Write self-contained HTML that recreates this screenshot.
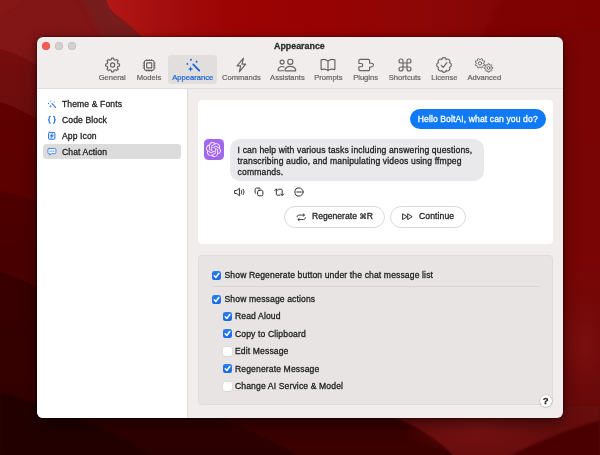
<!DOCTYPE html>
<html lang="en">
<head>
<meta charset="utf-8">
<title>Appearance</title>
<style>
*{box-sizing:border-box;margin:0;padding:0}
html,body{width:600px;height:455px;overflow:hidden;background:#5a0505}
body{font-family:"Liberation Sans",sans-serif;color:#1f1f1f;-webkit-text-stroke:.28px currentColor;position:relative;-webkit-font-smoothing:antialiased}
#wall{position:absolute;left:0;top:0;width:600px;height:455px;display:block}
#win{will-change:transform;position:absolute;left:37px;top:37px;width:526px;height:381px;border-radius:6px;background:#f1eded;overflow:hidden;
 box-shadow:0 0 0 .5px rgba(0,0,0,.4),0 7px 16px rgba(0,0,0,.4),0 0 5px rgba(0,0,0,.35)}
.abs{position:absolute}
.tl{position:absolute;top:4.900px;width:7.800px;height:7.800px;border-radius:50%;box-shadow:inset 0 0 0 .5px rgba(0,0,0,.13)}
#title{position:absolute;left:-.6px;width:526px;top:2.5px;text-align:center;font-weight:bold;font-size:8.900px;line-height:12px;color:#2b2b2b}
#tbline{position:absolute;left:0;top:51px;width:526px;height:1px;background:#e0dcdb}
.tbi{position:absolute;top:18px;height:28.500px;text-align:center;font-size:7.600px;color:#666363;-webkit-text-stroke:.2px currentColor;white-space:nowrap}
.tbi svg{position:absolute;top:1.900px;left:50%;margin-left:-8px;width:16px;height:16px;overflow:visible}
.tbi span{position:absolute;left:-20px;right:-20px;top:18px;line-height:9px;text-align:center}
.tbi.sel{background:#e2dedd;border-radius:4px;color:#1261d6}
#side{position:absolute;left:0;top:52px;width:151px;height:329px;background:#fff;border-right:1px solid #dedada}
.si{position:absolute;left:6px;width:137.500px;height:15.400px;border-radius:3.500px;font-size:8.600px;letter-spacing:.1px;line-height:15.400px;padding-left:19px;color:#222;white-space:nowrap}
.si svg{position:absolute;left:4.100px;top:2.900px;width:9.800px;height:9.800px;overflow:visible}
.si.sel{background:#dcdcdc}
.si .t{display:inline-block;transform:translateY(.5px)}
#card{position:absolute;left:161px;top:62.5px;width:355px;height:144.5px;background:#fff;border-radius:4px}
#ububble{position:absolute;left:211.500px;top:9px;width:136.5px;height:20.5px;border-radius:10.5px;background:#0f79f7;color:#fff;font-size:8.600px;letter-spacing:.1px;line-height:20.500px;text-align:center;white-space:nowrap}
#avatar{position:absolute;width:20.400px;height:20.400px;border-radius:4.500px;background:#a068ec}
#abubble{position:absolute;left:193px;top:102px;width:253.5px;height:42px;border-radius:10px;background:#e9e9eb;font-size:8.600px;letter-spacing:.13px;line-height:10.900px;padding:6px 0 0 7.600px;color:#1d1d1d;white-space:nowrap}
.act{position:absolute;top:86.100px;width:12px;height:12px;overflow:visible}
.pill{position:absolute;top:106.700px;height:21.500px;border-radius:11px;border:1px solid #d9d9d9;background:#fff;font-size:8.600px;letter-spacing:.1px;line-height:19.5px;color:#222;white-space:nowrap}
#group{position:absolute;left:161px;top:218px;width:355px;height:149.5px;border-radius:4px;background:#e7e4e3;border:0.5px solid #dfdbda}
.cb{position:absolute;width:9.200px;height:9.200px;border-radius:2.300px}
.cb.on{background:linear-gradient(#2a7ff3,#1468e6)}
.cb.off{background:#fff;box-shadow:0 0 0 .5px #d8d5d5,0 .5px .8px rgba(0,0,0,.12)}
.cb svg{position:absolute;left:0;top:0;width:9.200px;height:9.200px}
.lbl{position:absolute;font-size:8.600px;letter-spacing:.12px;line-height:11px;color:#1d1d1d;white-space:nowrap}
#help{position:absolute;left:502.5px;top:357.5px;width:12.5px;height:12.5px;border-radius:50%;background:#fff;box-shadow:0 0 0 0.5px rgba(0,0,0,.12),0 0.5px 1.5px rgba(0,0,0,.25);font-size:9.500px;font-weight:bold;line-height:12.800px;text-align:center;color:#222}
</style>
</head>
<body>
<svg id="wall" viewBox="0 0 600 455">
<defs>
<linearGradient id="gbase" x1="0" y1="0" x2="0" y2="1">
<stop offset="0" stop-color="#8f1414"/><stop offset="0.12" stop-color="#7e1010"/><stop offset="0.3" stop-color="#690505"/><stop offset="0.5" stop-color="#520000"/><stop offset="0.72" stop-color="#3e0000"/><stop offset="0.9" stop-color="#340000"/><stop offset="1" stop-color="#2a0000"/>
</linearGradient>
<linearGradient id="gtop" x1="0" y1="0" x2="1" y2="0">
<stop offset="0" stop-color="#b31717"/><stop offset="0.1" stop-color="#a60f0f"/><stop offset="0.25" stop-color="#9c0404"/><stop offset="0.42" stop-color="#990202"/><stop offset="0.65" stop-color="#8c0707"/><stop offset="0.8" stop-color="#820606"/><stop offset="1" stop-color="#7a0404"/>
</linearGradient>
<linearGradient id="gright" x1="0" y1="0" x2="0" y2="1">
<stop offset="0" stop-color="#7a0404"/><stop offset="0.55" stop-color="#7a0505"/><stop offset="0.75" stop-color="#730909"/><stop offset="0.92" stop-color="#6a0a0a"/><stop offset="1" stop-color="#600808"/>
</linearGradient>
<radialGradient id="gglow" cx="0.5" cy="0.5" r="0.5">
<stop offset="0" stop-color="#7e1212"/><stop offset="1" stop-color="#7e1212" stop-opacity="0"/>
</radialGradient>
<radialGradient id="gglow2" cx="0.5" cy="0.5" r="0.5"><stop offset="0" stop-color="#7c1313" stop-opacity=".85"/><stop offset="1" stop-color="#7c1313" stop-opacity="0"/></radialGradient>
<linearGradient id="gl1" x1="0" y1="48" x2="0" y2="135" gradientUnits="userSpaceOnUse"><stop offset="0" stop-color="#760d0d"/><stop offset="1" stop-color="#680606"/></linearGradient>
<linearGradient id="gl2" x1="0" y1="101" x2="0" y2="220" gradientUnits="userSpaceOnUse"><stop offset="0" stop-color="#610303"/><stop offset="1" stop-color="#590000"/></linearGradient>
<linearGradient id="gl3" x1="0" y1="190" x2="0" y2="300" gradientUnits="userSpaceOnUse"><stop offset="0" stop-color="#4f0000"/><stop offset="1" stop-color="#470000"/></linearGradient>
<linearGradient id="gl4" x1="0" y1="271" x2="0" y2="415" gradientUnits="userSpaceOnUse"><stop offset="0" stop-color="#390000"/><stop offset="1" stop-color="#320000"/></linearGradient>
<filter id="b1" x="-20%" y="-5%" width="140%" height="110%"><feGaussianBlur stdDeviation=".7"/></filter>
<filter id="b2" x="-20%" y="-20%" width="140%" height="140%"><feGaussianBlur stdDeviation="1.2"/></filter>
<filter id="b4" x="-30%" y="-30%" width="160%" height="160%"><feGaussianBlur stdDeviation="3.2"/></filter>
<filter id="b3" x="-30%" y="-30%" width="160%" height="160%"><feGaussianBlur stdDeviation="2.2"/></filter>
<filter id="b6" x="-20%" y="-20%" width="140%" height="140%"><feGaussianBlur stdDeviation="5"/></filter>
</defs>
<rect width="600" height="455" fill="url(#gbase)"/>
<!-- top-left medium red area -->
<path d="M-5 -5H112L125 40L50 85H-5Z" fill="#821515"/>
<path d="M0 16L24 0H0Z" fill="#8c1a1a" opacity=".4" filter="url(#b2)"/>
<!-- dark fold band -->
<path d="M76 -10H111C111 8 114 13 120 17C128 23 136 30 148 42L148 66H114C106 42 90 14 76 -10Z" fill="#761b1b" filter="url(#b4)"/>
<!-- bright red top region and right side -->
<path d="M106.500 0C108 7 112 12 118 16C126 21.500 133 28 141.500 36L154 48H600V0Z" fill="url(#gtop)"/>
<path d="M500 0L478 45H600V0Z" fill="#7e0505" opacity=".55" filter="url(#b2)"/>
<rect x="540" y="30" width="60" height="400" fill="url(#gright)"/>
<ellipse cx="584" cy="345" rx="22" ry="45" fill="url(#gglow)" opacity=".7"/>
<!-- left strip folds -->
<g filter="url(#b1)">
<path d="M-4 48C12 51 28 58 48 74V135H-4Z" fill="url(#gl1)"/>
<path d="M-4 101C14 106 30 114 48 127V220H-4Z" fill="url(#gl2)"/>
<path d="M-4 190C14 193 30 198 48 206V300H-4Z" fill="url(#gl3)"/>
<path d="M-4 271C14 276 30 283 48 293V415H-4Z" fill="url(#gl4)"/>
</g>
<path d="M0 392C20 398 60 412 100 428C120 437 138 447 150 457H0Z" fill="#220000" filter="url(#b2)"/>
<!-- bottom strip -->
<path d="M200 410C240 426 275 442 300 457H600V410Z" fill="#3b0000" filter="url(#b2)"/>
<path d="M368 406H600V457H454C442 443 424 430 400 420C390 416 378 413 368 411Z" fill="#680808" filter="url(#b2)"/>
<ellipse cx="478" cy="430" rx="75" ry="24" fill="url(#gglow2)"/>
<path d="M600 420C572 428 540 440 508 457H600Z" fill="#4c0404" filter="url(#b2)"/>
</svg>

<div id="win">
 <div class="tl" style="left:5px;background:#fb5a52"></div>
 <div class="tl" style="left:18px;background:#d3d0cf"></div>
 <div class="tl" style="left:31px;background:#d3d0cf"></div>
 <div id="title">Appearance</div>
<div class="tbi" style="left:50.7px;width:49px"><svg viewBox="0 0 16 16" fill="none" stroke="currentColor" stroke-width="1.150" stroke-linecap="round" stroke-linejoin="round"><g transform="translate(.6 0)"><path d="M13.34 6.66 L14.92 6.97 L14.92 9.03 L13.34 9.34 L12.72 10.83 L13.62 12.17 L12.17 13.62 L10.83 12.72 L9.34 13.34 L9.03 14.92 L6.97 14.92 L6.66 13.34 L5.17 12.72 L3.83 13.62 L2.38 12.17 L3.28 10.83 L2.66 9.34 L1.08 9.03 L1.08 6.97 L2.66 6.66 L3.28 5.17 L2.38 3.83 L3.83 2.38 L5.17 3.28 L6.66 2.66 L6.97 1.08 L9.03 1.08 L9.34 2.66 L10.83 3.28 L12.17 2.38 L13.62 3.83 L12.72 5.17Z"/><circle cx="8" cy="8" r="2.100"/></g></svg><span>General</span></div>
<div class="tbi" style="left:87.5px;width:49px"><svg viewBox="0 0 16 16" fill="none" stroke="currentColor" stroke-width="1.150" stroke-linecap="round" stroke-linejoin="round"><g transform="translate(.2 .4)"><rect x="3.1" y="3.1" width="9.8" height="9.8" rx="1.8"/><rect x="5.5" y="5.5" width="5" height="5" rx=".4"/><path d="M5.6 2v1.100M8 2v1.100M10.4 2v1.100M5.6 12.900v1.100M8 12.900v1.100M10.4 12.900v1.100M2 5.600h1.100M2 8h1.100M2 10.400h1.100M12.900 5.600h1.100M12.900 8h1.100M12.900 10.400h1.100" stroke-width=".9"/></g></svg><span>Models</span></div>
<div class="tbi sel" style="left:131.2px;width:49px"><svg viewBox="0 0 16 16" fill="none" stroke="currentColor" stroke-width="1.150" stroke-linecap="round" stroke-linejoin="round"><path d="M8.200 7.300L14.300 13.600" stroke-width="1.700"/><g fill="currentColor" stroke="none"><circle cx="6" cy="2.800" r=".95"/><circle cx="11.600" cy="4.800" r=".95"/><circle cx="2.400" cy="6.900" r=".95"/><path d="M5.600 9.300L6.300 11.300L8.300 12L6.300 12.700L5.600 14.700L4.900 12.700L2.900 12L4.900 11.300Z"/></g></svg><span>Appearance</span></div>
<div class="tbi" style="left:179.9px;width:49px"><svg viewBox="0 0 16 16" fill="none" stroke="currentColor" stroke-width="1.150" stroke-linecap="round" stroke-linejoin="round"><path d="M10.500 1.200L4 8.800H7.700L6.300 14.800L12.700 7.100H8.900Z"/></svg><span>Commands</span></div>
<div class="tbi" style="left:225.9px;width:49px"><svg viewBox="0 0 20 16" style="width:20px;margin-left:-10px" fill="none" stroke="currentColor" stroke-width="1.150" stroke-linecap="round" stroke-linejoin="round"><circle cx="5.1" cy="5.1" r="2"/><path d="M7 9.9C6.4 9.6 5.8 9.5 5.1 9.5C2.9 9.5 1.5 10.9 1.1 12.7C1 13.3 1.2 13.7 1.8 13.7H6.4"/><circle cx="13.3" cy="4.8" r="2.6"/><path d="M8.7 13.9h9.3c.6 0 .8-.4.7-1c-.5-2-2.500-3.500-5.400-3.500s-4.800 1.500-5.300 3.500c-.1.600.1 1 .7 1z"/></svg><span>Assistants</span></div>
<div class="tbi" style="left:266.9px;width:49px"><svg viewBox="0 0 16 16" fill="none" stroke="currentColor" stroke-width="1.150" stroke-linecap="round" stroke-linejoin="round"><path d="M8 4.100C6.500 2.500 3.500 2.100 1.100 2.900V12.600C3.500 11.800 6.500 12.200 8 13.700C9.500 12.200 12.500 11.800 14.900 12.600V2.900C12.500 2.100 9.500 2.500 8 4.100ZM8 4.100V13.700"/></svg><span>Prompts</span></div>
<div class="tbi" style="left:304.1px;width:49px"><svg viewBox="0 0 16 16" fill="none" stroke="currentColor" stroke-width="1.150" stroke-linecap="round" stroke-linejoin="round"><path d="M2.100 2.400H10.400a1.200 1.200 0 0 1 1.200 1.200V6.200h1.900a1.900 1.900 0 0 1 0 3.800h-1.900V12.400a1.200 1.200 0 0 1-1.200 1.200H2.100a1.200 1.200 0 0 1-1.200-1.200V9.700h2.200a1.600 1.600 0 0 0 0-3.200H.9V3.600a1.200 1.200 0 0 1 1.200-1.200Z"/></svg><span>Plugins</span></div>
<div class="tbi" style="left:343.3px;width:49px"><svg viewBox="0 0 16 16" fill="none" stroke="currentColor" stroke-width="1.150" stroke-linecap="round" stroke-linejoin="round"><path d="M6 6V4a2 2 0 1 0-2 2H12a2 2 0 1 0-2-2V12a2 2 0 1 0 2-2H4a2 2 0 1 0 2 2Z"/></svg><span>Shortcuts</span></div>
<div class="tbi" style="left:382.9px;width:49px"><svg viewBox="0 0 16 16" fill="none" stroke="currentColor" stroke-width="1.150" stroke-linecap="round" stroke-linejoin="round"><path d="M5.74 2.55C6.08 0.02 9.92 0.02 10.26 2.55C12.29 1.00 15.00 3.71 13.45 5.74C15.98 6.08 15.98 9.92 13.45 10.26C15.00 12.29 12.29 15.00 10.26 13.45C9.92 15.98 6.08 15.98 5.74 13.45C3.71 15.00 1.00 12.29 2.55 10.26C0.02 9.92 0.02 6.08 2.55 5.74C1.00 3.71 3.71 1.00 5.74 2.55Z"/><path d="M5.200 8.300L7.200 10.400L10.900 5.700"/></svg><span>License</span></div>
<div class="tbi" style="left:422.8px;width:49px"><svg viewBox="0 0 20 16" style="width:20px;margin-left:-10px" fill="none" stroke="currentColor" stroke-linecap="round" stroke-linejoin="round" stroke-width=".9"><path d="M9.76 6.86 L10.75 7.49 L10.20 8.82 L9.05 8.56 L8.26 9.35 L8.52 10.50 L7.19 11.05 L6.56 10.06 L5.44 10.06 L4.81 11.05 L3.48 10.50 L3.74 9.35 L2.95 8.56 L1.80 8.82 L1.25 7.49 L2.24 6.86 L2.24 5.74 L1.25 5.11 L1.80 3.78 L2.95 4.04 L3.74 3.25 L3.48 2.10 L4.81 1.55 L5.44 2.54 L6.56 2.54 L7.19 1.55 L8.52 2.10 L8.26 3.25 L9.05 4.04 L10.20 3.78 L10.75 5.11 L9.76 5.74Z"/><circle cx="6" cy="6.300" r="1.700"/><path d="M17.70 10.17 L18.75 10.33 L18.75 11.57 L17.70 11.73 L17.34 12.60 L17.97 13.45 L17.10 14.32 L16.25 13.69 L15.38 14.05 L15.22 15.10 L13.98 15.10 L13.82 14.05 L12.95 13.69 L12.10 14.32 L11.23 13.45 L11.86 12.60 L11.50 11.73 L10.45 11.57 L10.45 10.33 L11.50 10.17 L11.86 9.30 L11.23 8.45 L12.10 7.58 L12.95 8.21 L13.82 7.85 L13.98 6.80 L15.22 6.80 L15.38 7.85 L16.25 8.21 L17.10 7.58 L17.97 8.45 L17.34 9.30Z"/><circle cx="14.600" cy="10.950" r="1.400"/></svg><span>Advanced</span></div>
 <div id="tbline"></div>
<div id="side">
<div class="si" style="top:7.4px"><svg viewBox="0 0 11 11" fill="none" stroke="currentColor" stroke-width="1.3" stroke-linecap="round" stroke-linejoin="round" style="color:#2f78e0"><path d="M5.600 5.300L9.800 9.600" stroke-width="1.300"/><g fill="currentColor" stroke="none"><circle cx="4.200" cy="2.300" r=".65"/><circle cx="8" cy="3.400" r=".65"/><circle cx="1.700" cy="5" r=".65"/><path d="M3.900 6.300L4.350 7.550L5.600 8L4.350 8.450L3.900 9.700L3.450 8.450L2.200 8L3.450 7.550Z"/></g></svg><span class="t">Theme &amp; Fonts</span></div>
<div class="si" style="top:23.1px"><svg viewBox="0 0 11 11" fill="none" stroke="currentColor" stroke-width="1.3" stroke-linecap="round" stroke-linejoin="round" style="color:#2f78e0"><path d="M3.700 1.600C2.700 1.600 2.500 2.100 2.500 2.900V4.200C2.500 4.900 2.200 5.300 1.500 5.400C2.200 5.500 2.500 5.900 2.500 6.600V7.900C2.500 8.700 2.700 9.200 3.700 9.200M7.300 1.600C8.300 1.600 8.500 2.100 8.500 2.900V4.200C8.500 4.900 8.800 5.300 9.500 5.400C8.800 5.500 8.500 5.900 8.500 6.600V7.900C8.500 8.700 8.300 9.200 7.300 9.200"/></svg><span class="t">Code Block</span></div>
<div class="si" style="top:38.9px"><svg viewBox="0 0 11 11" fill="none" stroke="currentColor" stroke-width="1.3" stroke-linecap="round" stroke-linejoin="round" style="color:#2f78e0"><rect x="1.700" y="1.500" width="7.200" height="7.800" rx="1.100" fill="#dbe9fb" stroke-width="1.100"/><path d="M6.100 2.500L3.500 5.900H5.200L4.500 8.400L7.200 4.900H5.500Z" fill="currentColor" stroke-width=".4"/></svg><span class="t">App Icon</span></div>
<div class="si sel" style="top:54.5px"><svg viewBox="0 0 11 11" fill="none" stroke="currentColor" stroke-width="1.3" stroke-linecap="round" stroke-linejoin="round" style="color:#2f78e0"><g transform="translate(0 .9)"><path d="M2.400 1.900H8.600A1.400 1.400 0 0 1 10 3.300V6.300A1.400 1.400 0 0 1 8.600 7.700H4.900L3 9.500V7.700H2.400A1.400 1.400 0 0 1 1 6.300V3.300A1.400 1.400 0 0 1 2.400 1.900Z" fill="#f2f6fc" stroke-width=".95"/><g fill="currentColor" stroke="none"><circle cx="3.500" cy="4.800" r=".65"/><circle cx="5.500" cy="4.800" r=".65"/><circle cx="7.500" cy="4.800" r=".65"/></g></g></svg><span class="t">Chat Action</span></div>
</div>
<div id="card">
<div id="ububble">Hello BoltAI, what can you do?</div>
<div id="avatar" style="left:5.600px;top:39.700px"><svg viewBox="0 0 24 24" style="position:absolute;left:2.700px;top:2.700px;width:15px;height:15px" fill="#f8e6fb"><path d="M22.2819 9.8211a5.9847 5.9847 0 0 0-.5157-4.9108 6.0462 6.0462 0 0 0-6.5098-2.9A6.0651 6.0651 0 0 0 4.9807 4.1818a5.9847 5.9847 0 0 0-3.9977 2.9 6.0462 6.0462 0 0 0 .7427 7.0966 5.98 5.98 0 0 0 .511 4.9107 6.051 6.051 0 0 0 6.5146 2.9001A5.9847 5.9847 0 0 0 13.2599 24a6.0557 6.0557 0 0 0 5.7718-4.2058 5.9894 5.9894 0 0 0 3.9977-2.9001 6.0557 6.0557 0 0 0-.7475-7.0729zm-9.022 12.6081a4.4755 4.4755 0 0 1-2.8764-1.0408l.1419-.0804 4.7783-2.7582a.7948.7948 0 0 0 .3927-.6813v-6.7369l2.02 1.1686a.071.071 0 0 1 .038.052v5.5826a4.504 4.504 0 0 1-4.4945 4.4944zm-9.6607-4.1254a4.4708 4.4708 0 0 1-.5346-3.0137l.142.0852 4.783 2.7582a.7712.7712 0 0 0 .7806 0l5.8428-3.3685v2.3324a.0804.0804 0 0 1-.0332.0615L9.74 19.9502a4.4992 4.4992 0 0 1-6.1408-1.6464zM2.3408 7.8956a4.485 4.485 0 0 1 2.3655-1.9728V11.6a.7664.7664 0 0 0 .3879.6765l5.8144 3.3543-2.0201 1.1685a.0757.0757 0 0 1-.071 0l-4.8303-2.7865A4.504 4.504 0 0 1 2.3408 7.872zm16.5963 3.8558L13.1038 8.364 15.1192 7.2a.0757.0757 0 0 1 .071 0l4.8303 2.7913a4.4944 4.4944 0 0 1-.6765 8.1042v-5.6772a.79.79 0 0 0-.407-.667zm2.0107-3.0231l-.142-.0852-4.7735-2.7818a.7759.7759 0 0 0-.7854 0L9.409 9.2297V6.8974a.0662.0662 0 0 1 .0284-.0615l4.8303-2.7866a4.4992 4.4992 0 0 1 6.6802 4.66zM8.3065 12.863l-2.02-1.1638a.0804.0804 0 0 1-.038-.0567V6.0742a4.4992 4.4992 0 0 1 7.3757-3.4537l-.142.0805L8.704 5.459a.7948.7948 0 0 0-.3927.6813zm1.0976-2.3654l2.602-1.4998 2.6069 1.4998v2.9994l-2.5974 1.4997-2.6067-1.4997Z"/></svg></div>
<div id="abubble" style="left:32px;top:39.500px">I can help with various tasks including answering questions,<br>transcribing audio, and manipulating videos using ffmpeg<br>commands.</div>
<svg class="act" style="left:35.500px;color:#333" viewBox="0 0 12 12" fill="none" stroke="currentColor" stroke-width="1" stroke-linecap="round" stroke-linejoin="round"><path d="M1 4.500H2.800L5.400 2.200V9.800L2.800 7.500H1Z"/><path d="M7.300 4.400C8 5.300 8 6.700 7.300 7.600M9 3.200C10.400 4.800 10.400 7.200 9 8.800"/></svg>
<svg class="act" style="left:55.400px;color:#333" viewBox="0 0 12 12" fill="none" stroke="currentColor" stroke-width="1" stroke-linecap="round" stroke-linejoin="round"><rect x="4.600" y="4.300" width="5.300" height="5.500" rx="1.500" fill="#fff"/><path d="M2.900 7.600C2.400 7.400 2.100 6.900 2.100 6.300V3.500C2.100 2.700 2.700 2.100 3.500 2.100H6.100C6.800 2.100 7.300 2.400 7.500 2.900"/></svg>
<svg class="act" style="left:75px;color:#333" viewBox="0 0 12 12" fill="none" stroke="currentColor" stroke-width="1" stroke-linecap="round" stroke-linejoin="round"><path d="M3.300 3.100V8.200C3.300 8.800 3.700 9.200 4.300 9.200H6.900M9.200 9.300V4.200C9.200 3.600 8.800 3.200 8.200 3.200H5.600"/><path d="M1.800 4.500L3.300 2.900L4.800 4.500M7.700 7.900L9.200 9.500L10.700 7.900"/></svg>
<svg class="act" style="left:95px;color:#333" viewBox="0 0 12 12" fill="none" stroke="currentColor" stroke-width="1" stroke-linecap="round" stroke-linejoin="round"><circle cx="6" cy="6" r="4.100"/><path d="M3.800 6H8.200"/></svg>
<div class="pill" style="left:86px;width:100.500px;padding-left:27px;letter-spacing:0"><svg viewBox="0 0 12 10" fill="none" stroke="currentColor" stroke-width="1" stroke-linecap="round" stroke-linejoin="round" style="position:absolute;left:10.500px;top:5.900px;width:10.400px;height:8.600px;color:#222"><path d="M1.300 4.600V4.200C1.300 3.100 2.100 2.400 3.100 2.400H9.600M10.700 5.400V5.800C10.700 6.900 9.900 7.600 8.900 7.600H2.400"/><path d="M8.300 1L9.800 2.400L8.300 3.800M3.700 6.200L2.200 7.600L3.700 9"/></svg>Regenerate <span style="font-family:'DejaVu Sans',sans-serif;font-size:7.800px;letter-spacing:-.3px;-webkit-text-stroke:.15px currentColor">⌘</span>R</div>
<div class="pill" style="left:192px;width:75.500px;padding-left:28px"><svg viewBox="0 0 12 8" fill="none" stroke="currentColor" stroke-width="1" stroke-linecap="round" stroke-linejoin="round" style="position:absolute;left:11.200px;top:6.200px;width:11.500px;height:7.400px;color:#222"><path d="M.8 1.100L5.300 4L.8 6.900ZM6.300 1.100L10.800 4L6.300 6.900Z"/></svg>Continue</div>
</div>
<div id="group">
<div class="cb on" style="left:13.3px;top:15.2px"><svg viewBox="0 0 9 9" fill="none" stroke="#fff" stroke-width="1.500" stroke-linecap="round" stroke-linejoin="round"><path d="M2.200 4.700L3.800 6.400L6.700 2.400"/></svg></div><div class="lbl" style="left:25.5px;top:14.0px">Show Regenerate button under the chat message list</div>
<div style="position:absolute;left:13.500px;top:30.300px;width:327px;height:1px;background:#d9d5d4"></div>
<div class="cb on" style="left:13.3px;top:38.5px"><svg viewBox="0 0 9 9" fill="none" stroke="#fff" stroke-width="1.500" stroke-linecap="round" stroke-linejoin="round"><path d="M2.200 4.700L3.800 6.400L6.700 2.400"/></svg></div><div class="lbl" style="left:25.5px;top:37.900px">Show message actions</div>
<div class="cb on" style="left:23.8px;top:55.9px"><svg viewBox="0 0 9 9" fill="none" stroke="#fff" stroke-width="1.500" stroke-linecap="round" stroke-linejoin="round"><path d="M2.200 4.700L3.800 6.400L6.700 2.400"/></svg></div><div class="lbl" style="left:36.0px;top:54.7px">Read Aloud</div>
<div class="cb on" style="left:23.8px;top:73.3px"><svg viewBox="0 0 9 9" fill="none" stroke="#fff" stroke-width="1.500" stroke-linecap="round" stroke-linejoin="round"><path d="M2.200 4.700L3.800 6.400L6.700 2.400"/></svg></div><div class="lbl" style="left:36.0px;top:72.700px">Copy to Clipboard</div>
<div class="cb off" style="left:23.8px;top:90.8px"></div><div class="lbl" style="left:36.0px;top:89.6px">Edit Message</div>
<div class="cb on" style="left:23.8px;top:108.3px"><svg viewBox="0 0 9 9" fill="none" stroke="#fff" stroke-width="1.500" stroke-linecap="round" stroke-linejoin="round"><path d="M2.200 4.700L3.800 6.400L6.700 2.400"/></svg></div><div class="lbl" style="left:36.0px;top:107.700px">Regenerate Message</div>
<div class="cb off" style="left:23.8px;top:125.5px"></div><div class="lbl" style="left:36.0px;top:124.900px">Change AI Service &amp; Model</div>
</div>
 <div id="help">?</div>
</div>
</body>
</html>
